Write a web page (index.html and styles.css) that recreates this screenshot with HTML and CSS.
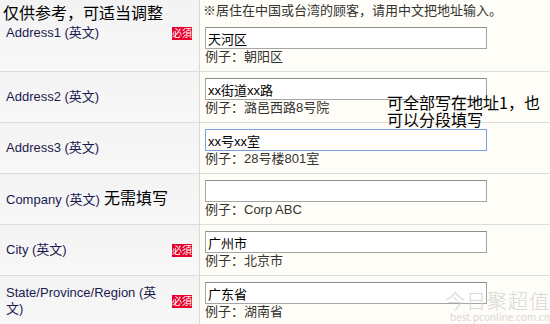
FILE: index.html
```html
<!DOCTYPE html>
<html lang="zh-CN">
  <head>
    <meta charset="UTF-8" />
    <meta name="viewport" content="width=device-width, initial-scale=1.0" />
    <title>地址填写</title>
    <link rel="stylesheet" href="styles.css">
  </head>
  <body>
    <!-- 地址表单 -->
    <div class="form">
      <div class="row first">
        <div class="label-cell">
          <span class="label">Address1 (英文)</span>
          <span class="must">必須</span>
        </div>
        <div class="field-cell">
          <p class="note">※居住在中国或台湾的顾客，请用中文把地址输入。</p>
          <input class="text" type="text" value="天河区" />
          <p class="hint">例子：朝阳区</p>
        </div>
      </div>

      <div class="row">
        <div class="label-cell">
          <span class="label">Address2 (英文)</span>
        </div>
        <div class="field-cell">
          <input class="text" type="text" value="xx街道xx路" />
          <p class="hint">例子：潞邑西路8号院</p>
        </div>
      </div>

      <div class="row">
        <div class="label-cell">
          <span class="label">Address3 (英文)</span>
        </div>
        <div class="field-cell">
          <input class="text focus" type="text" value="xx号xx室" />
          <p class="hint">例子：28号楼801室</p>
        </div>
      </div>

      <div class="row">
        <div class="label-cell">
          <span class="label">Company (英文)<span class="memo-inline">无需填写</span></span>
        </div>
        <div class="field-cell">
          <input class="text" type="text" value="" />
          <p class="hint">例子：Corp ABC</p>
        </div>
      </div>

      <div class="row">
        <div class="label-cell">
          <span class="label">City (英文)</span>
          <span class="must">必須</span>
        </div>
        <div class="field-cell">
          <input class="text" type="text" value="广州市" />
          <p class="hint">例子：北京市</p>
        </div>
      </div>

      <div class="row">
        <div class="label-cell">
          <span class="label">State/Province/Region (英文)</span>
          <span class="must">必須</span>
        </div>
        <div class="field-cell">
          <input class="text" type="text" value="广东省" />
          <p class="hint">例子：湖南省</p>
        </div>
      </div>
    </div>

    <!-- 手写批注 -->
    <div class="memo memo-top">仅供参考，可适当调整</div>
    <div class="memo memo-addr">可全部写在地址1，也<br />可以分段填写</div>

    <!-- 水印 -->
    <div class="watermark">
      <span class="wm-title">今日聚超值</span>
      <span class="wm-url">best.pconline.com.cn</span>
    </div>
  </body>
</html>
```

FILE: styles.css
```css
body {
  margin: 0;
  font-family: "Liberation Sans", "Noto Sans CJK SC", sans-serif;
  font-size: 13px;
  color: #333;
  background-color: #fffdf7;
  position: relative;
  height: 324px;
  overflow: hidden;
}

p {
  margin: 0;
}

.form {
  width: 550px;
}

.row {
  display: flex;
  border-bottom: 1px solid #dcdcdc;
}

.label-cell {
  width: 200px;
  flex-shrink: 0;
  box-sizing: border-box;
  display: flex;
  align-items: center;
  gap: 8px;
  padding: 0 7px 0 6px;
  background: linear-gradient(#f3f3f3, #f8f8f8);
  border-right: 1px solid #d9d9d9;
}

.first .label-cell {
  padding-bottom: 5px;
}

.label {
  flex: 1;
  color: #1a1a50;
  line-height: 16px;
}

.memo-inline {
  margin-left: 4px;
  font-size: 16px;
  color: #000;
}

.must {
  width: 20px;
  height: 13px;
  line-height: 13px;
  font-size: 10px;
  text-align: center;
  color: #fff;
  background-color: #e8002b;
  flex-shrink: 0;
}

.field-cell {
  flex: 1;
  padding: 6px 5px 6px;
}

.note {
  margin: -4px 0 7px -2px;
  line-height: 18px;
  color: #333;
}

.text {
  display: block;
  box-sizing: border-box;
  width: 282px;
  height: 22px;
  margin: 0;
  padding: 0 2px;
  border: 1px solid #a5a5a5;
  border-top-color: #8e8e8e;
  background: #fff;
  font-family: "Liberation Sans", "Noto Sans CJK SC", sans-serif;
  font-size: 13px;
  color: #000;
  outline: none;
}

.text.focus {
  border-color: #7ca3d8;
}

.hint {
  width: fit-content;
  line-height: 16px;
  color: #333;
}

.memo {
  position: absolute;
  font-family: "Noto Sans CJK SC", sans-serif;
  font-size: 16px;
  color: #000;
}

.memo-top {
  left: 3px;
  top: 1px;
  line-height: 22px;
}

.memo-addr {
  left: 387px;
  top: 94px;
  line-height: 17px;
}

.watermark {
  position: absolute;
  right: 0;
  bottom: 1px;
  width: 110px;
  text-align: right;
  color: #d8d8d8;
  font-family: "Noto Sans CJK SC", sans-serif;
}

.wm-title {
  display: block;
  font-size: 20px;
  font-weight: 300;
  line-height: 21px;
  letter-spacing: 1px;
}

.wm-url {
  display: block;
  font-size: 10px;
  line-height: 12px;
}
```
